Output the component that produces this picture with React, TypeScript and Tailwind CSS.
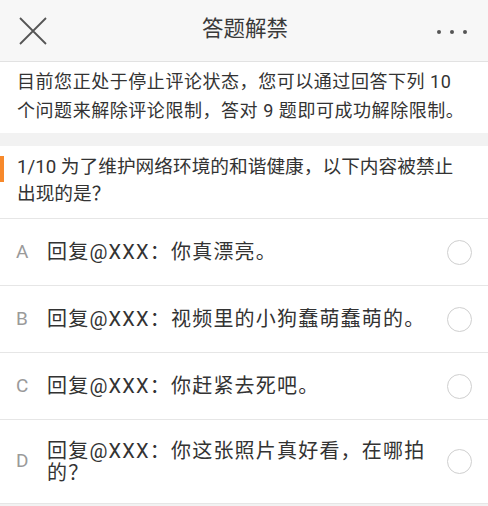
import React from "react";

const options: { key: string; text: React.ReactNode; tall?: boolean }[] = [
  { key: "A", text: "回复@XXX：你真漂亮。" },
  { key: "B", text: "回复@XXX：视频里的小狗蠢萌蠢萌的。" },
  { key: "C", text: "回复@XXX：你赶紧去死吧。" },
  {
    key: "D",
    text: (
      <>
        回复@XXX：你这张照片真好看，在哪拍
        <br />
        的？
      </>
    ),
    tall: true,
  },
];

const font = {
  fontFamily: 'Roboto, "Noto Sans CJK SC", "Noto Sans", sans-serif',
};

export default function App(): React.JSX.Element {
  return (
    <div className="w-[488px] h-[506px] overflow-hidden bg-[#f2f2f2] text-[#333]" style={font}>
      {/* Top bar */}
      <div className="h-[62px] flex items-center justify-between bg-[#f7f7f7] border-b border-[#e2e2e2] px-[19px]">
        <svg width="28" height="28" viewBox="0 0 28 28" className="text-[#555]">
          <path d="M1 1 L27 27 M27 1 L1 27" stroke="currentColor" strokeWidth="1.8" fill="none" />
        </svg>
        <div className="text-[21.5px] text-[#3a3a3a] -mt-[2px] pl-[6px]">答题解禁</div>
        <div className="flex gap-[9px] pr-[2px] pt-[2px]">
          <span className="w-[4px] h-[4px] rounded-full bg-[#555]" />
          <span className="w-[4px] h-[4px] rounded-full bg-[#555]" />
          <span className="w-[4px] h-[4px] rounded-full bg-[#555]" />
        </div>
      </div>

      {/* Intro */}
      <div className="bg-white px-[17px] pt-[5px] pb-[8px] text-[18px] tracking-[0.55px] leading-[29px] text-[#333] whitespace-nowrap">
        目前您正处于停止评论状态，您可以通过回答下列 10
        <br />
        个问题来解除评论限制，答对 9 题即可成功解除限制。
      </div>

      {/* Question */}
      <div className="mt-[13px] bg-white">
        <div className="relative px-[17px] pt-[8px] pb-[10px] text-[18.7px] leading-[27px] border-b border-[#e6e6e6] whitespace-nowrap">
          <span className="absolute left-0 top-[10px] w-[4px] h-[26px] bg-[#f7892b]" />
          1/10 为了维护网络环境的和谐健康，以下内容被禁止
          <br />
          出现的是？
        </div>
        {options.map((o) => (
          <div
            key={o.key}
            className={`flex items-center pl-[16px] pr-[16px] border-b border-[#e6e6e6] ${
              o.tall ? "h-[84px]" : "h-[67px]"
            }`}
          >
            <span className="w-[31px] shrink-0 text-[19px] text-[#9a9a9a]">{o.key}</span>
            <span className="flex-1 text-[20px] tracking-[1.2px] leading-[22px] text-[#333] whitespace-nowrap">
              {o.text}
            </span>
            <span className="w-[25px] h-[25px] shrink-0 rounded-full border-[1.5px] border-[#cfcfcf]" />
          </div>
        ))}
      </div>
    </div>
  );
}
